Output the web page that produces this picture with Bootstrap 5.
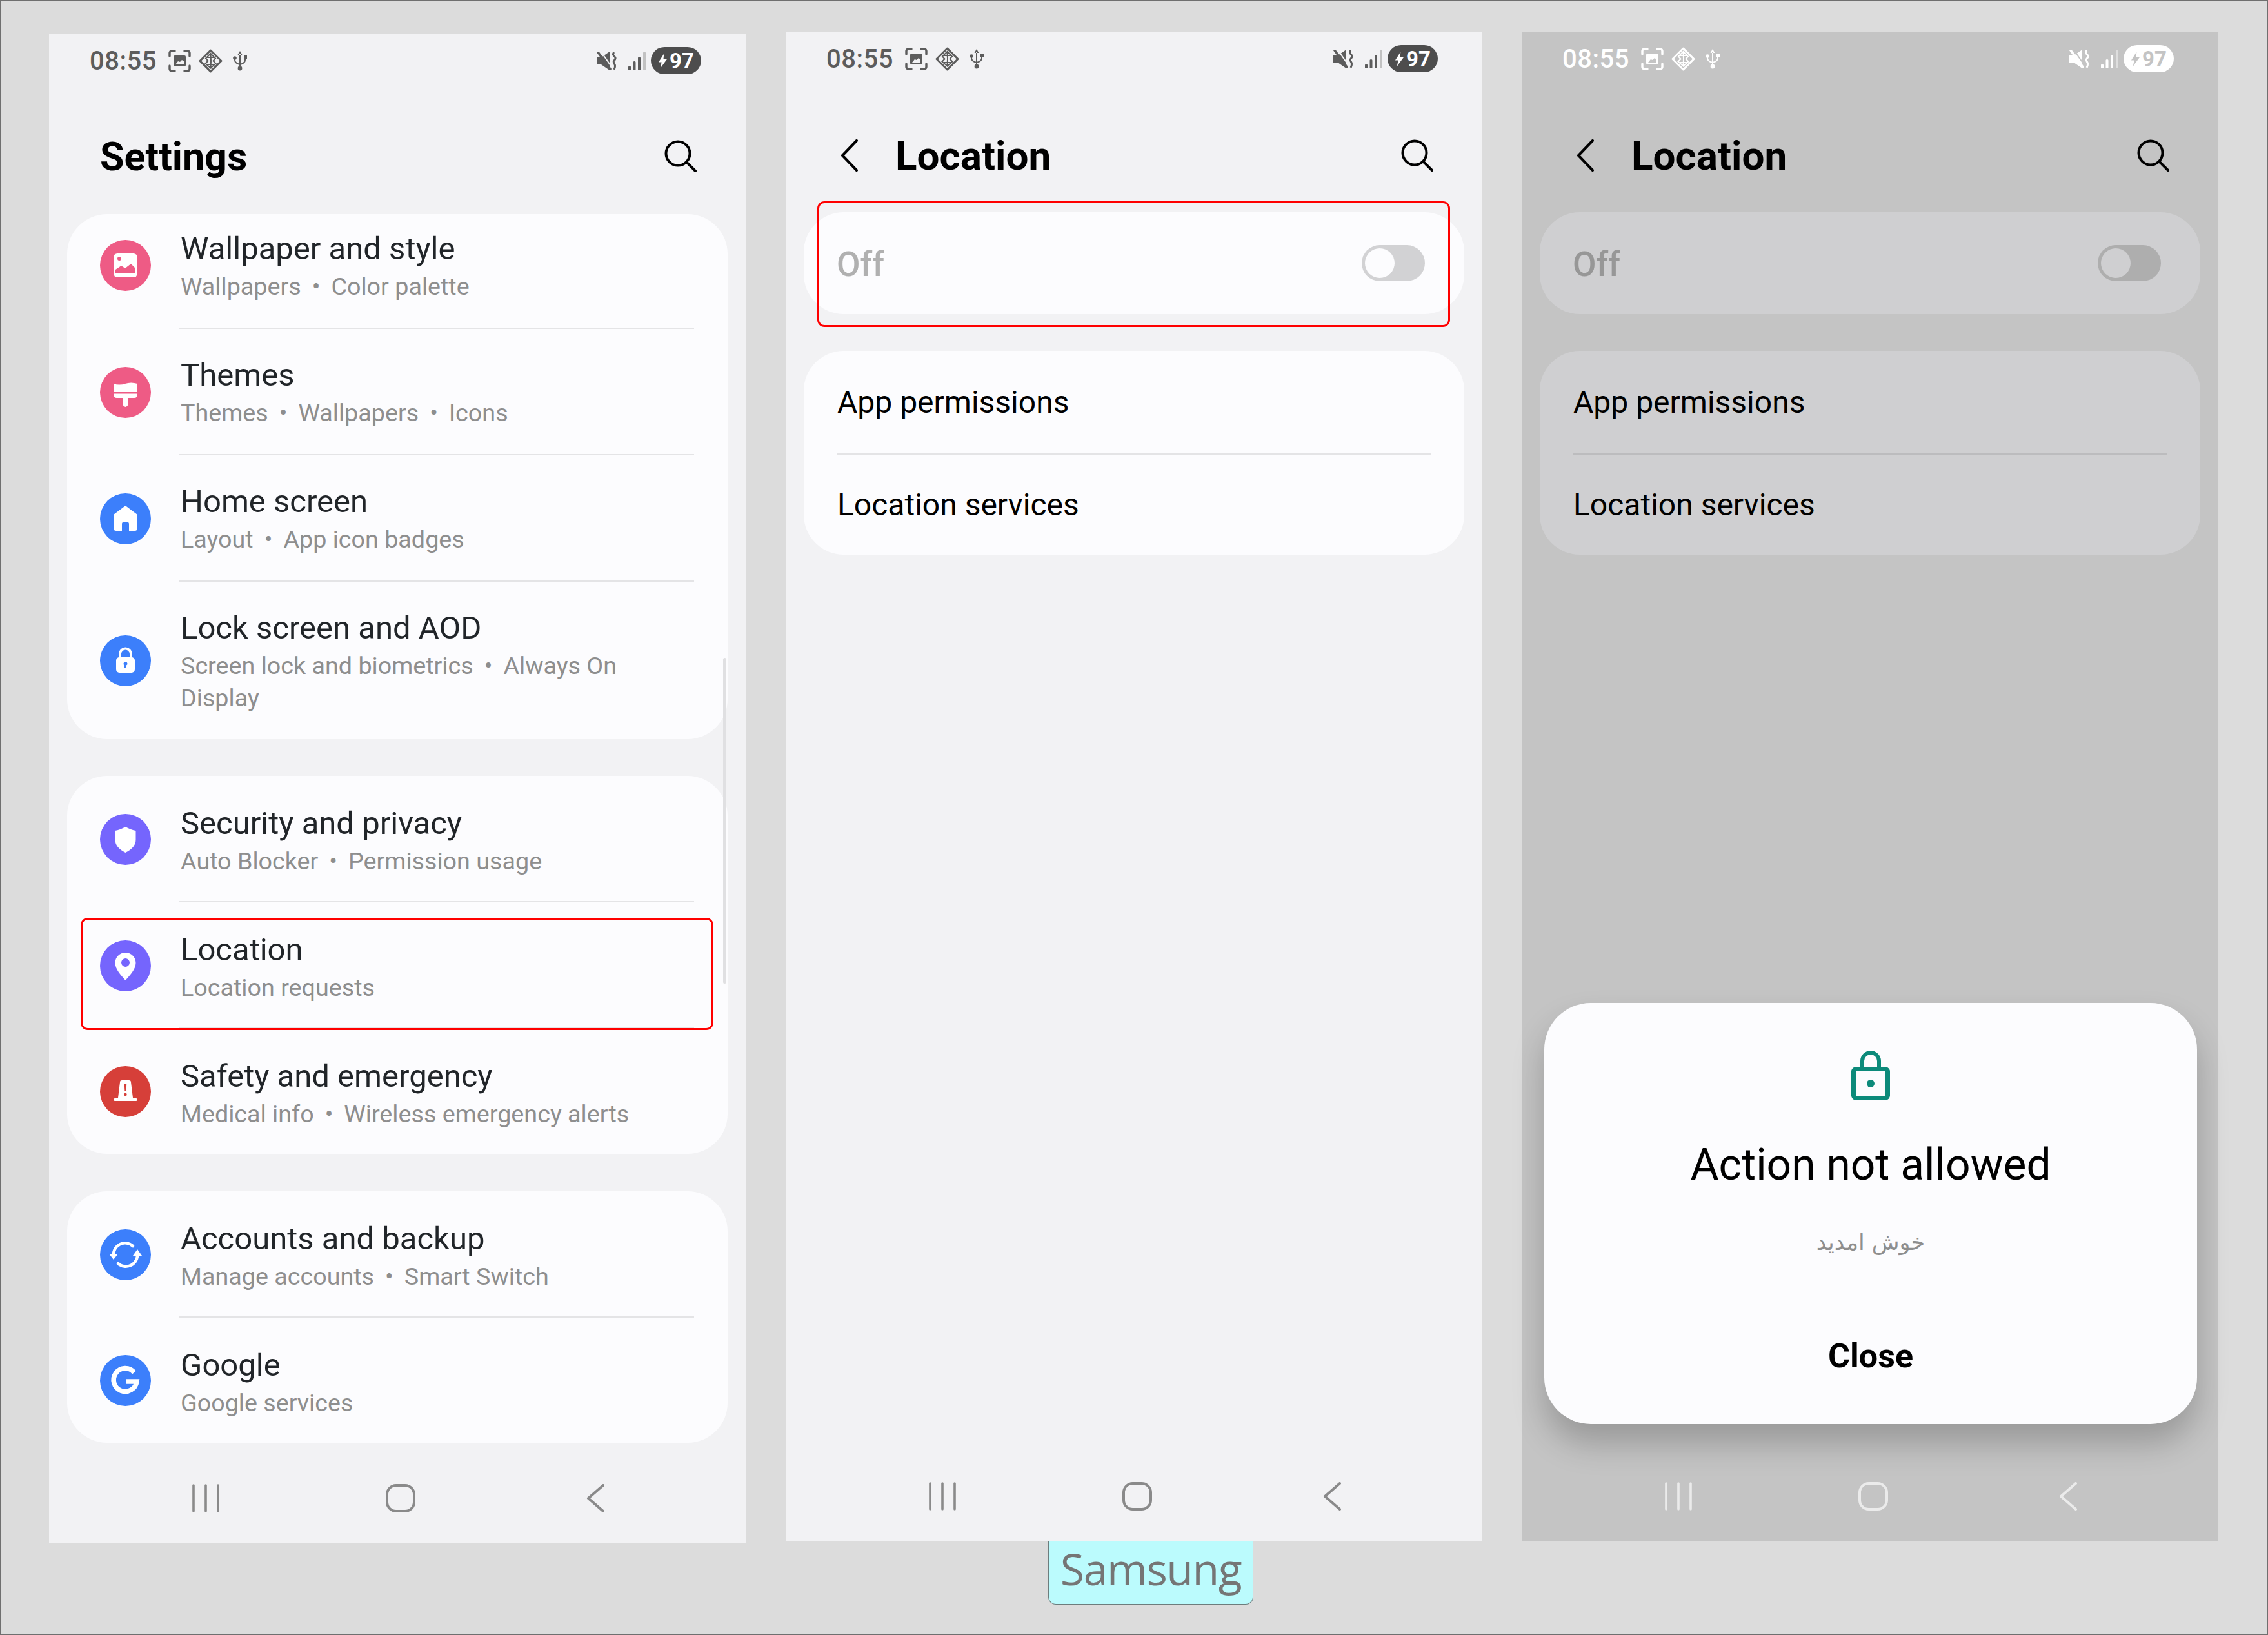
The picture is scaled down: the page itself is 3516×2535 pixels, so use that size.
<!DOCTYPE html>
<html lang="en">
<head>
  <meta charset="UTF-8" />
  <title>Samsung location settings</title>
  <link href="https://cdn.jsdelivr.net/npm/bootstrap@5.3.3/dist/css/bootstrap.min.css" rel="stylesheet">
  <style>
    body { background: #dcdcdc; font-family: Roboto, "Liberation Sans", sans-serif; color: #000; }
    .shot { width: 3516px; height: 2535px; border: 1px solid #6f6f6f; padding-left: 75px; overflow: hidden; box-sizing: border-box; }
    .col-a { margin-top: 51px; }
    .col-b { margin-top: 48px; margin-left: 62px; }
    .col-c { margin-top: 48px; margin-left: 61px; }

    .phone { width: 1080px; height: 2340px; background: #f2f2f4; --pbg: #f2f2f4; --card: #fcfcfe; --line: #e4e4e6; --st: #5c5c5c; --st-bg: #4d4d4d; --st-fg: #fff; --soft: #8e8e8e; --nav: #8a8a8a; --off: #b0b0b0; --track: #d2d2d4; --sig: #c2c2c2; }
    .phone.dim { background: #c4c4c4; --pbg: #c4c4c4; --card: #cfcfd1; --line: #bcbcbe; --st: #fff; --st-bg: #fff; --st-fg: #c4c4c4; --nav: #ebebeb; --off: #979797; --track: #aeaeae; --sig: #dedede; }

    .status { height: 84px; padding: 0 69px 0 63px; color: var(--st); }
    .status .time { font-size: 40px; font-weight: 500; margin: 2px 18px 0 0; letter-spacing: .5px; line-height: 1; }
    .status .mute { margin-right: 18px; }
    .pill { width: 78px; height: 42px; border-radius: 21px; background: var(--st-bg); color: var(--st-fg); font-size: 33px; font-weight: 700; line-height: 1; gap: 3px; }

    .appbar { height: 196px; padding: 16px 76px 0 79px; }
    .appbar h1 { font-size: 61px; font-weight: 700; margin: 2px 0 0; line-height: 1; }
    .appbar.sub { padding: 20px 76px 0 85px; }
    .appbar.sub h1 { margin-left: 58px; font-size: 62px; }

    .group { margin: 0 28px 57px; background: var(--card); border-radius: 62px; overflow: hidden; }
    .group.mid { margin-bottom: 58px; }
    .group .list-group-item { background: transparent; padding: 0 52px 0 51px; border: 0; }
    .ico { width: 79px; height: 79px; margin-right: 44px; flex: none; }
    .item-body { padding: 43px 0 39px; border-bottom: 2px solid var(--line); }
    .list-group-item:last-child .item-body { border-bottom: 0; }
    .group.first .list-group-item:first-child .item-body { padding-top: 25px; }
    .group.first .list-group-item:first-child .ico { margin-bottom: 20px; }
    .group.shift .item-body { padding: 45px 0 37px; }
    .item-title { font-size: 49px; line-height: 58px; padding-left: 2px; }
    .item-sub { font-size: 37.7px; line-height: 50px; margin-top: 4px; padding-left: 2px; color: var(--soft); }
    .item-sub i { font-style: normal; padding: 0 17px; }

    .group.switch { height: 158px; padding: 0 61px 0 51px; }
    .off-label { font-size: 53px; font-weight: 500; color: var(--off); margin-top: 6px; }
    .toggle { width: 98px; height: 56px; border-radius: 28px; background: var(--track); padding: 5px; }
    .toggle span { display: block; width: 46px; height: 46px; border-radius: 50%; background: var(--card); }
    .plain-row { padding: 0 52px; }
    .plain-row > div { height: 155px; font-size: 48px; }
    .plain-row:first-child > div { height: 161px; border-bottom: 2px solid var(--line); }

    .navkeys { margin-top: auto; padding: 0 0 47px 222px; color: var(--nav); gap: 258px; }
    .navkeys svg:last-child { margin-left: 7px; }

    .scrollbar { position: absolute; left: 1045px; top: 968px; width: 5px; height: 505px; background: #e0e0e2; border-radius: 3px; }
    .callout { position: absolute; border: 3px solid #f00; border-radius: 11px; }
    .callout-location { left: 49px; top: 1371px; width: 981px; height: 174px; }
    .callout-off { left: 49px; top: 263px; width: 981px; height: 195px; }

    .dialog { position: absolute; left: 35px; right: 33px; bottom: 181px; height: 653px; background: #fcfcfe; border-radius: 72px; box-shadow: 0 30px 50px rgba(0, 0, 0, .22); padding-top: 73px; }
    .dialog h2 { font-size: 67.7px; font-weight: 400; margin: 67px 0 0; line-height: 1; }
    .dialog p { font-family: "DejaVu Sans", sans-serif; font-size: 35px; color: #8e8e8e; margin: 68px 0 0; line-height: 1; }
    .dialog .close-btn { font-size: 52px; font-weight: 700; color: #000; padding: 0; border: 0; margin-top: 133px; line-height: 1; }

    .tag { width: 318px; height: 99px; margin-left: 407px; background: #bbfbfd; border: 1px solid #6d7d7d; border-top: 0; border-radius: 0 0 12px 12px; color: #757575; font-family: "Open Sans", sans-serif; font-size: 68px; letter-spacing: -1.5px; line-height: 86px; text-align: center; }
  </style>
</head>
<body class="m-0">

<svg width="0" height="0" class="position-absolute">
  <defs>
    <symbol id="shot" viewBox="0 0 35 35">
      <path d="M2 10V5a3 3 0 0 1 3-3h5M25 2h5a3 3 0 0 1 3 3v5M33 25v5a3 3 0 0 1-3 3h-5M10 33H5a3 3 0 0 1-3-3v-5" fill="none" stroke="currentColor" stroke-width="3.4" stroke-linecap="round"/>
      <path d="M10 9h15a2 2 0 0 1 2 2v13a2 2 0 0 1-2 2H10a2 2 0 0 1-2-2V11a2 2 0 0 1 2-2zm1 14h13v-5l-3-2-3 3-3-1z" fill="currentColor" fill-rule="evenodd"/>
    </symbol>
    <symbol id="diamond" viewBox="0 0 37 37">
      <path d="M18.5 2 35 18.5 18.5 35 2 18.5z" fill="none" stroke="currentColor" stroke-width="3" stroke-linejoin="round"/>
      <path d="M18.5 7 11 14.5l3.5 4-4 4 8 7 .5-11zm0 0 7.5 7.5-3.5 4 4 4-8 7M13 13h11M13 24h11" fill="none" stroke="currentColor" stroke-width="2"/>
    </symbol>
    <symbol id="usb" viewBox="0 0 22 31">
      <path d="M11 0 7.5 6h7zM10 5h2v20h-2z" fill="currentColor"/>
      <circle cx="11" cy="27" r="3.4" fill="currentColor"/>
      <circle cx="3" cy="11" r="2.8" fill="currentColor"/>
      <path d="M17 7h5v5h-5z" fill="currentColor"/>
      <path d="M3 11v3q0 5 8 7 8-2 8-7v-3" fill="none" stroke="currentColor" stroke-width="2"/>
    </symbol>
    <symbol id="mute" viewBox="0 0 31 29">
      <path d="M0 9h7L20 0v29L7 20H0z" fill="currentColor"/>
      <path d="M6 -1l18 26" stroke="var(--pbg)" stroke-width="2"/>
      <path d="M2 1l19 26" stroke="currentColor" stroke-width="3.600" stroke-linecap="round"/>
      <path d="M27 1c-3 3-1 5 1 7s1 4-1 6 0 4 1 6 1 4-1 8" fill="none" stroke="currentColor" stroke-width="3"/>
    </symbol>
    <symbol id="sig" viewBox="0 0 27 29">
      <rect x="0" y="22" width="4" height="7" rx="1.800" fill="currentColor"/>
      <rect x="7.500" y="15" width="4" height="14" rx="1.800" fill="currentColor"/>
      <rect x="15" y="8" width="4" height="21" rx="1.800" fill="currentColor"/>
      <rect x="23" y="0" width="4" height="29" rx="1.800" fill="var(--sig)"/>
    </symbol>
    <symbol id="bolt" viewBox="0 0 16 24">
      <path d="M10 0 1 14h5l-2 10 11-15H9z" fill="currentColor"/>
    </symbol>
    <symbol id="search" viewBox="0 0 50 50">
      <circle cx="21" cy="21" r="18.5" fill="none" stroke="currentColor" stroke-width="4"/>
      <path d="M35 35l13 13" stroke="currentColor" stroke-width="4" stroke-linecap="round"/>
    </symbol>
    <symbol id="chev" viewBox="0 0 27 50">
      <path d="M25 2 3 25l22 23" fill="none" stroke="currentColor" stroke-width="4" stroke-linecap="round" stroke-linejoin="round"/>
    </symbol>
    <symbol id="recents" viewBox="0 0 42 44">
      <path d="M2 2v40M21 2v40M40 2v40" stroke="currentColor" stroke-width="3.6" stroke-linecap="round"/>
    </symbol>
    <symbol id="home" viewBox="0 0 46 44">
      <rect x="2" y="2" width="42" height="40" rx="14" fill="none" stroke="currentColor" stroke-width="4"/>
    </symbol>
    <symbol id="back" viewBox="0 0 29 44">
      <path d="M26 2 3 22l23 20" fill="none" stroke="currentColor" stroke-width="4" stroke-linecap="round" stroke-linejoin="round"/>
    </symbol>
  </defs>
</svg>

<div class="shot d-flex">

  <!-- settings list -->
  <div class="col-a">
    <div class="phone position-relative d-flex flex-column">
      <div class="status d-flex align-items-center">
        <span class="time">08:55</span>
        <svg width="35" height="35" class="me-2"><use href="#shot"/></svg>
        <svg width="37" height="37" class="ms-1"><use href="#diamond"/></svg>
        <svg width="22" height="31" class="ms-3"><use href="#usb"/></svg>
        <svg width="31" height="29" class="ms-auto mute"><use href="#mute"/></svg>
        <svg width="27" height="29"><use href="#sig"/></svg>
        <span class="pill d-flex align-items-center justify-content-center ms-2"><svg width="15" height="23"><use href="#bolt"/></svg>97</span>
      </div>
      <div class="appbar d-flex align-items-center justify-content-between">
        <h1>Settings</h1>
        <svg width="50" height="50"><use href="#search"/></svg>
      </div>

      <div class="group first list-group">
        <div class="list-group-item d-flex align-items-center">
          <svg class="ico" viewBox="0 0 79 79"><circle cx="39.5" cy="39.5" r="39.5" fill="#ee5b85"/><rect x="21" y="21" width="37" height="37" rx="6" fill="#fff"/><circle cx="30" cy="29" r="3" fill="#ee5b85"/><path d="M24 51v-5l9-6 6 4 9-7 7 7v7z" fill="#ee5b85"/></svg>
          <div class="item-body flex-grow-1">
            <div class="item-title">Wallpaper and style</div>
            <div class="item-sub">Wallpapers<i>•</i>Color palette</div>
          </div>
        </div>
        <div class="list-group-item d-flex align-items-center">
          <svg class="ico" viewBox="0 0 79 79"><circle cx="39.5" cy="39.5" r="39.5" fill="#ee5b85"/><path d="M21 26q9 3 18 0t19 0v13H21z" fill="#fff"/><path d="M21 41.500h37v1.500q0 5-5 5H44l-.5 11q-4 6-8 0L35 48H26q-5 0-5-5z" fill="#fff"/></svg>
          <div class="item-body flex-grow-1">
            <div class="item-title">Themes</div>
            <div class="item-sub">Themes<i>•</i>Wallpapers<i>•</i>Icons</div>
          </div>
        </div>
        <div class="list-group-item d-flex align-items-center">
          <svg class="ico" viewBox="0 0 79 79"><circle cx="39.5" cy="39.5" r="39.5" fill="#3c7ffb"/><path d="M39.5 19 21 33v21q0 4 4 4h9V47q0-2 2-2h7q2 0 2 2v11h9q4 0 4-4V33z" fill="#fff"/></svg>
          <div class="item-body flex-grow-1">
            <div class="item-title">Home screen</div>
            <div class="item-sub">Layout<i>•</i>App icon badges</div>
          </div>
        </div>
        <div class="list-group-item d-flex align-items-center">
          <svg class="ico" viewBox="0 0 79 79"><circle cx="39.5" cy="39.5" r="39.5" fill="#3c7ffb"/><path d="M31 36v-7a8.500 8.500 0 0 1 17 0v7" fill="none" stroke="#fff" stroke-width="4"/><rect x="25" y="34" width="29" height="24" rx="5" fill="#fff"/><path d="M39.500 41a3 3 0 0 1 1.500 5.600V51h-3v-4.400a3 3 0 0 1 1.500-5.600z" fill="#3c7ffb"/></svg>
          <div class="item-body flex-grow-1">
            <div class="item-title">Lock screen and AOD</div>
            <div class="item-sub">Screen lock and biometrics<i>•</i>Always On<br>Display</div>
          </div>
        </div>
      </div>

      <div class="group mid shift list-group">
        <div class="list-group-item d-flex align-items-center">
          <svg class="ico" viewBox="0 0 79 79"><circle cx="39.5" cy="39.5" r="39.5" fill="#7565fd"/><path d="M39.500 20q9 5 16 6v14q0 12-16 20-16-8-16-20V26q7-1 16-6z" fill="#fff"/></svg>
          <div class="item-body flex-grow-1">
            <div class="item-title">Security and privacy</div>
            <div class="item-sub">Auto Blocker<i>•</i>Permission usage</div>
          </div>
        </div>
        <div class="list-group-item d-flex align-items-center">
          <svg class="ico" viewBox="0 0 79 79"><circle cx="39.5" cy="39.5" r="39.5" fill="#7565fd"/><path d="M39.500 19c9 0 16 7 16 16 0 10-10 20-16 27-6-7-16-17-16-27 0-9 7-16 16-16z" fill="#fff"/><circle cx="39.5" cy="34.500" r="6.500" fill="#7565fd"/></svg>
          <div class="item-body flex-grow-1">
            <div class="item-title">Location</div>
            <div class="item-sub">Location requests</div>
          </div>
        </div>
        <div class="list-group-item d-flex align-items-center">
          <svg class="ico" viewBox="0 0 79 79"><circle cx="39.5" cy="39.5" r="39.5" fill="#d63f39"/><path d="M31 25q0-3 3-3h11q3 0 3 3l3 24H28z" fill="#fff"/><rect x="21" y="50" width="37" height="4" rx="2" fill="#fff"/><path d="M37.800 28h3.400l-.6 11h-2.200z" fill="#d63f39"/><circle cx="39.500" cy="44" r="2.200" fill="#d63f39"/></svg>
          <div class="item-body flex-grow-1">
            <div class="item-title">Safety and emergency</div>
            <div class="item-sub">Medical info<i>•</i>Wireless emergency alerts</div>
          </div>
        </div>
      </div>

      <div class="group shift list-group mb-0">
        <div class="list-group-item d-flex align-items-center">
          <svg class="ico" viewBox="0 0 79 79"><circle cx="39.5" cy="39.5" r="39.5" fill="#3c7ffb"/><path d="M21 41a18 18 0 0 1 30-15" fill="none" stroke="#fff" stroke-width="4.500" stroke-linecap="round"/><path d="M58 38a18 18 0 0 1-30 15" fill="none" stroke="#fff" stroke-width="4.500" stroke-linecap="round"/><path d="M14 38h14l-7 9zM51 41h14l-7-10z" fill="#fff"/></svg>
          <div class="item-body flex-grow-1">
            <div class="item-title">Accounts and backup</div>
            <div class="item-sub">Manage accounts<i>•</i>Smart Switch</div>
          </div>
        </div>
        <div class="list-group-item d-flex align-items-center">
          <svg class="ico" viewBox="0 0 79 79"><circle cx="39.5" cy="39.5" r="39.5" fill="#3c7ffb"/><path d="M53 27a18 18 0 1 0 4 14H40" fill="none" stroke="#fff" stroke-width="7.500"/></svg>
          <div class="item-body flex-grow-1">
            <div class="item-title">Google</div>
            <div class="item-sub">Google services</div>
          </div>
        </div>
      </div>

      <div class="navkeys d-flex align-items-center">
        <svg width="42" height="44"><use href="#recents"/></svg>
        <svg width="46" height="44"><use href="#home"/></svg>
        <svg width="29" height="44"><use href="#back"/></svg>
      </div>

      <div class="scrollbar"></div>
      <div class="callout callout-location"></div>
    </div>
  </div>

  <!-- location screen -->
  <div class="col-b">
    <div class="phone position-relative d-flex flex-column">
      <div class="status d-flex align-items-center">
        <span class="time">08:55</span>
        <svg width="35" height="35" class="me-2"><use href="#shot"/></svg>
        <svg width="37" height="37" class="ms-1"><use href="#diamond"/></svg>
        <svg width="22" height="31" class="ms-3"><use href="#usb"/></svg>
        <svg width="31" height="29" class="ms-auto mute"><use href="#mute"/></svg>
        <svg width="27" height="29"><use href="#sig"/></svg>
        <span class="pill d-flex align-items-center justify-content-center ms-2"><svg width="15" height="23"><use href="#bolt"/></svg>97</span>
      </div>
      <div class="appbar sub d-flex align-items-center">
        <svg width="27" height="50"><use href="#chev"/></svg>
        <h1>Location</h1>
        <svg width="50" height="50" class="ms-auto"><use href="#search"/></svg>
      </div>
      <div class="group switch first d-flex align-items-center justify-content-between">
        <span class="off-label">Off</span>
        <div class="toggle"><span></span></div>
      </div>
      <div class="group">
        <div class="plain-row"><div class="d-flex align-items-center">App permissions</div></div>
        <div class="plain-row"><div class="d-flex align-items-center">Location services</div></div>
      </div>
      <div class="navkeys d-flex align-items-center">
        <svg width="42" height="44"><use href="#recents"/></svg>
        <svg width="46" height="44"><use href="#home"/></svg>
        <svg width="29" height="44"><use href="#back"/></svg>
      </div>
      <div class="callout callout-off"></div>
    </div>
    <div class="tag">Samsung</div>
  </div>

  <!-- blocked dialog over location screen -->
  <div class="col-c">
    <div class="phone dim position-relative d-flex flex-column">
      <div class="status d-flex align-items-center">
        <span class="time">08:55</span>
        <svg width="35" height="35" class="me-2"><use href="#shot"/></svg>
        <svg width="37" height="37" class="ms-1"><use href="#diamond"/></svg>
        <svg width="22" height="31" class="ms-3"><use href="#usb"/></svg>
        <svg width="31" height="29" class="ms-auto mute"><use href="#mute"/></svg>
        <svg width="27" height="29"><use href="#sig"/></svg>
        <span class="pill d-flex align-items-center justify-content-center ms-2"><svg width="15" height="23"><use href="#bolt"/></svg>97</span>
      </div>
      <div class="appbar sub d-flex align-items-center">
        <svg width="27" height="50"><use href="#chev"/></svg>
        <h1>Location</h1>
        <svg width="50" height="50" class="ms-auto"><use href="#search"/></svg>
      </div>
      <div class="group switch first d-flex align-items-center justify-content-between">
        <span class="off-label">Off</span>
        <div class="toggle"><span></span></div>
      </div>
      <div class="group">
        <div class="plain-row"><div class="d-flex align-items-center">App permissions</div></div>
        <div class="plain-row"><div class="d-flex align-items-center">Location services</div></div>
      </div>
      <div class="navkeys d-flex align-items-center">
        <svg width="42" height="44"><use href="#recents"/></svg>
        <svg width="46" height="44"><use href="#home"/></svg>
        <svg width="29" height="44"><use href="#back"/></svg>
      </div>
      <div class="dialog text-center d-flex flex-column align-items-center">
        <svg width="60" height="78" viewBox="0 0 60 78"><path d="M17 32V17a13 13 0 0 1 26 0v15" fill="none" stroke="#0c8a7a" stroke-width="6"/><rect x="3.500" y="29.500" width="53" height="45" rx="4" fill="none" stroke="#0c8a7a" stroke-width="7"/><circle cx="30" cy="52" r="6" fill="#0c8a7a"/></svg>
        <h2>Action not allowed</h2>
        <p dir="rtl">خوش امدید</p>
        <button type="button" class="btn close-btn">Close</button>
      </div>
    </div>
  </div>

</div>
</body>
</html>
